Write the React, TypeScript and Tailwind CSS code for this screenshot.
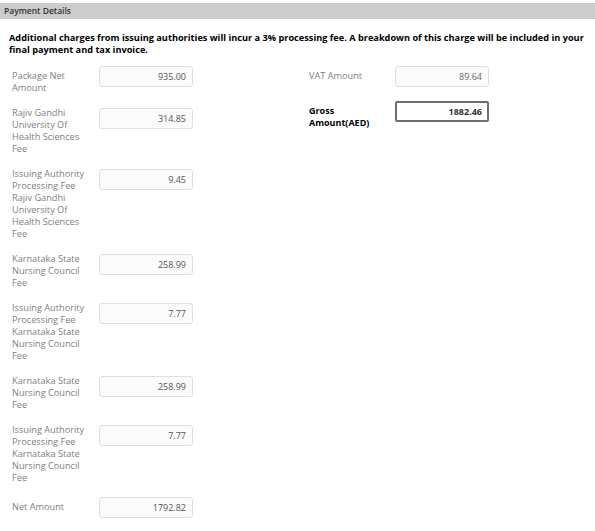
import React from "react";

type Row = { label: string; value: string; pad?: boolean };

const leftRows: Row[] = [
  { label: "Package Net Amount", value: "935.00", pad: true },
  { label: "Rajiv Gandhi University Of Health Sciences Fee", value: "314.85" },
  {
    label: "Issuing Authority Processing Fee Rajiv Gandhi University Of Health Sciences Fee",
    value: "9.45",
  },
  { label: "Karnataka State Nursing Council Fee", value: "258.99" },
  { label: "Issuing Authority Processing Fee Karnataka State Nursing Council Fee", value: "7.77" },
  { label: "Karnataka State Nursing Council Fee", value: "258.99" },
  { label: "Issuing Authority Processing Fee Karnataka State Nursing Council Fee", value: "7.77" },
  { label: "Net Amount", value: "1792.82", pad: true },
];

function Field({ row }: { row: Row }) {
  return (
    <div className="flex items-start">
      <div
        className={`w-[99px] shrink-0 pl-[12px] pr-[10px] text-[9.2px] leading-[12px] text-[#808080] ${
          row.pad ? "pt-[4px]" : "pt-[0px]"
        }`}
      >
        {row.label}
      </div>
      <div
        className={`w-[94px] h-[21px] shrink-0 rounded-[3px] border border-[#dedede] bg-[#fbfbfb] pr-[6px] text-right text-[9px] leading-[19px] text-[#555555] ${
          row.pad ? "" : "mt-[1px]"
        }`}
      >
        {row.value}
      </div>
    </div>
  );
}

export default function App() {
  return (
    <div className="w-[595px] h-[531px] bg-white pt-[3px] font-['Open_Sans',sans-serif] overflow-hidden">
      <div className="h-[16px] bg-[#cccccc] pl-[4px] text-[8.5px] font-semibold leading-[16px] text-[#333333]">
        Payment Details
      </div>
      <p className="mt-[13px] pl-[9px] pr-[2px] text-[9.2px] font-bold leading-[12px] text-black">
        Additional charges from issuing authorities will incur a 3% processing fee. A breakdown of this charge
        will be included in your final payment and tax invoice.
      </p>
      <div className="mt-[10px] grid grid-cols-[296px_1fr]">
        <div className="flex flex-col gap-[13px]">
          {leftRows.map((r, i) => (
            <Field key={i} row={r} />
          ))}
        </div>
        <div className="flex flex-col">
          <div className="flex items-start">
            <div className="w-[99px] shrink-0 pl-[13px] pr-[10px] pt-[4px] text-[9.2px] leading-[12px] text-[#808080]">
              VAT Amount
            </div>
            <div className="w-[94px] h-[21px] shrink-0 rounded-[3px] border border-[#dedede] bg-[#fbfbfb] pr-[6px] text-right text-[9px] leading-[19px] text-[#666666]">
              89.64
            </div>
          </div>
          <div className="mt-[14px] flex items-start">
            <div className="w-[99px] shrink-0 pl-[13px] pr-[10px] pt-[4px] text-[9px] font-bold leading-[12px] text-black">
              Gross Amount(AED)
            </div>
            <div className="w-[94px] h-[21px] shrink-0 rounded-[2px] border-2 border-[#6e6e6e] bg-white pr-[5px] text-right text-[9px] font-bold leading-[17px] text-[#333333]">
              1882.46
            </div>
          </div>
        </div>
      </div>
    </div>
  );
}
